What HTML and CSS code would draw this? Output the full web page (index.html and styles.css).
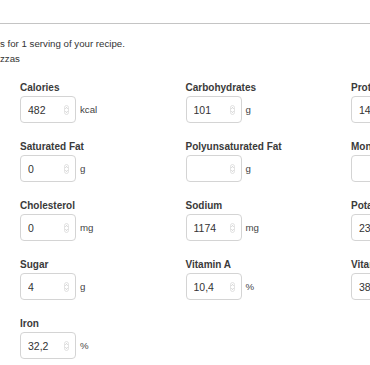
FILE: index.html
```html
<!DOCTYPE html>
<html lang="en">

<head>
  <meta charset="UTF-8">
  <meta name="viewport" content="width=device-width, initial-scale=1.0">
  <title>Nutrition facts</title>
  <link rel="stylesheet" href="styles.css">
</head>

<body>
  <main>
    <hr class="rule">
    <p class="intro">
      s for 1 serving of your recipe.<br>
      zzas
    </p>

    <div class="facts">
      <div class="field">
        <label>Calories</label>
        <div class="control">
          <div class="box"><input value="482"><svg class="spin" viewBox="0 0 5 10"><rect x="0.5" y="0.5" width="4" height="9" rx="2"/><path d="M1.5 3.6 L2.5 2.6 L3.5 3.6 M1.5 6.4 L2.5 7.4 L3.5 6.4"/></svg></div>
          <span class="unit">kcal</span>
        </div>
      </div>
      <div class="field">
        <label>Carbohydrates</label>
        <div class="control">
          <div class="box"><input value="101"><svg class="spin" viewBox="0 0 5 10"><rect x="0.5" y="0.5" width="4" height="9" rx="2"/><path d="M1.5 3.6 L2.5 2.6 L3.5 3.6 M1.5 6.4 L2.5 7.4 L3.5 6.4"/></svg></div>
          <span class="unit">g</span>
        </div>
      </div>
      <div class="field">
        <label>Protein</label>
        <div class="control">
          <div class="box"><input value="14"><svg class="spin" viewBox="0 0 5 10"><rect x="0.5" y="0.5" width="4" height="9" rx="2"/><path d="M1.5 3.6 L2.5 2.6 L3.5 3.6 M1.5 6.4 L2.5 7.4 L3.5 6.4"/></svg></div>
          <span class="unit">g</span>
        </div>
      </div>

      <div class="field">
        <label>Saturated Fat</label>
        <div class="control">
          <div class="box"><input value="0"><svg class="spin" viewBox="0 0 5 10"><rect x="0.5" y="0.5" width="4" height="9" rx="2"/><path d="M1.5 3.6 L2.5 2.6 L3.5 3.6 M1.5 6.4 L2.5 7.4 L3.5 6.4"/></svg></div>
          <span class="unit">g</span>
        </div>
      </div>
      <div class="field">
        <label>Polyunsaturated Fat</label>
        <div class="control">
          <div class="box"><input value=""><svg class="spin" viewBox="0 0 5 10"><rect x="0.5" y="0.5" width="4" height="9" rx="2"/><path d="M1.5 3.6 L2.5 2.6 L3.5 3.6 M1.5 6.4 L2.5 7.4 L3.5 6.4"/></svg></div>
          <span class="unit">g</span>
        </div>
      </div>
      <div class="field">
        <label>Monounsaturated Fat</label>
        <div class="control">
          <div class="box"><input value=""><svg class="spin" viewBox="0 0 5 10"><rect x="0.5" y="0.5" width="4" height="9" rx="2"/><path d="M1.5 3.6 L2.5 2.6 L3.5 3.6 M1.5 6.4 L2.5 7.4 L3.5 6.4"/></svg></div>
          <span class="unit">g</span>
        </div>
      </div>

      <div class="field">
        <label>Cholesterol</label>
        <div class="control">
          <div class="box"><input value="0"><svg class="spin" viewBox="0 0 5 10"><rect x="0.5" y="0.5" width="4" height="9" rx="2"/><path d="M1.5 3.6 L2.5 2.6 L3.5 3.6 M1.5 6.4 L2.5 7.4 L3.5 6.4"/></svg></div>
          <span class="unit">mg</span>
        </div>
      </div>
      <div class="field">
        <label>Sodium</label>
        <div class="control">
          <div class="box"><input value="1174"><svg class="spin" viewBox="0 0 5 10"><rect x="0.5" y="0.5" width="4" height="9" rx="2"/><path d="M1.5 3.6 L2.5 2.6 L3.5 3.6 M1.5 6.4 L2.5 7.4 L3.5 6.4"/></svg></div>
          <span class="unit">mg</span>
        </div>
      </div>
      <div class="field">
        <label>Potassium</label>
        <div class="control">
          <div class="box"><input value="23"><svg class="spin" viewBox="0 0 5 10"><rect x="0.5" y="0.5" width="4" height="9" rx="2"/><path d="M1.5 3.6 L2.5 2.6 L3.5 3.6 M1.5 6.4 L2.5 7.4 L3.5 6.4"/></svg></div>
          <span class="unit">mg</span>
        </div>
      </div>

      <div class="field">
        <label>Sugar</label>
        <div class="control">
          <div class="box"><input value="4"><svg class="spin" viewBox="0 0 5 10"><rect x="0.5" y="0.5" width="4" height="9" rx="2"/><path d="M1.5 3.6 L2.5 2.6 L3.5 3.6 M1.5 6.4 L2.5 7.4 L3.5 6.4"/></svg></div>
          <span class="unit">g</span>
        </div>
      </div>
      <div class="field">
        <label>Vitamin A</label>
        <div class="control">
          <div class="box"><input value="10,4"><svg class="spin" viewBox="0 0 5 10"><rect x="0.5" y="0.5" width="4" height="9" rx="2"/><path d="M1.5 3.6 L2.5 2.6 L3.5 3.6 M1.5 6.4 L2.5 7.4 L3.5 6.4"/></svg></div>
          <span class="unit">%</span>
        </div>
      </div>
      <div class="field">
        <label>Vitamin C</label>
        <div class="control">
          <div class="box"><input value="38"><svg class="spin" viewBox="0 0 5 10"><rect x="0.5" y="0.5" width="4" height="9" rx="2"/><path d="M1.5 3.6 L2.5 2.6 L3.5 3.6 M1.5 6.4 L2.5 7.4 L3.5 6.4"/></svg></div>
          <span class="unit">%</span>
        </div>
      </div>

      <div class="field">
        <label>Iron</label>
        <div class="control">
          <div class="box"><input value="32,2"><svg class="spin" viewBox="0 0 5 10"><rect x="0.5" y="0.5" width="4" height="9" rx="2"/><path d="M1.5 3.6 L2.5 2.6 L3.5 3.6 M1.5 6.4 L2.5 7.4 L3.5 6.4"/></svg></div>
          <span class="unit">%</span>
        </div>
      </div>
    </div>
  </main>
</body>

</html>
```

FILE: styles.css
```css
html,
body {
  overflow: hidden;
}

body {
  margin: 0;
  font-family: "Liberation Sans", Helvetica, Arial, sans-serif;
  font-size: 9.7px;
  color: #333;
  background-color: white;
}

.rule {
  margin: 23px 0 0;
  border: 0;
  border-top: 1px solid #c4c4c4;
}

.intro {
  margin: 12px 0 0;
  line-height: 15px;
  white-space: nowrap;
}

.facts {
  display: grid;
  grid-template-columns: repeat(3, 165.5px);
  row-gap: 18px;
  margin-top: 16px;
  padding-left: 20px;
}

.field label {
  display: block;
  font-weight: bold;
  font-size: 10px;
  line-height: 12px;
  margin-bottom: 2px;
  color: #3a3a3a;
  white-space: nowrap;
}

.control {
  display: flex;
  align-items: center;
  gap: 4px;
}

.box {
  display: flex;
  align-items: center;
  width: 56px;
  height: 27px;
  box-sizing: border-box;
  border: 1px solid #d4d4d4;
  border-radius: 4px;
  background: white;
}

.box input {
  flex: 1;
  min-width: 0;
  border: none;
  outline: none;
  background: transparent;
  padding: 0 0 0 7px;
  font-family: inherit;
  font-size: 10.5px;
  color: #333;
}

.spin {
  width: 5px;
  height: 10px;
  margin-right: 6px;
  flex: none;
}

.spin rect {
  fill: none;
  stroke: #d0d0d0;
  stroke-width: 0.6;
}

.spin path {
  fill: none;
  stroke: #9a9a9a;
  stroke-width: 0.6;
}

.unit {
  color: #444;
}
```
